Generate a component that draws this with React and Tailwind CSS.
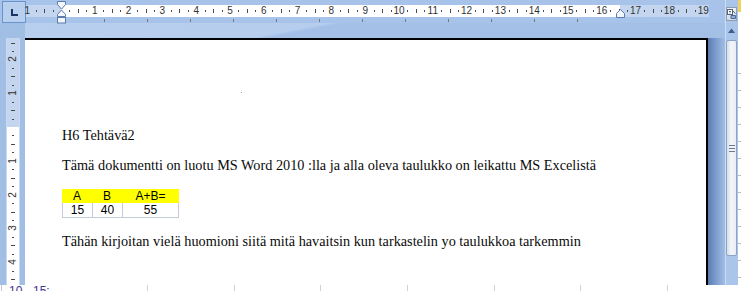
import React from "react";

const CM = 33.8;
const SANS = "font-['Liberation_Sans',Arial,sans-serif]";

function TabBox() {
  return (
    <div className="ml-[2px] mt-[1px] w-[24px] h-[22px] border border-[#6a92cf] bg-[#b9cfee] flex items-center justify-center">
      <svg width="7" height="7" viewBox="0 0 7 7">
        <path d="M0 0h2v5h5v2H0z" fill="#1b3466" />
      </svg>
    </div>
  );
}

function HRuler() {
  const O = 35;
  const W = 683;
  const ticks = [];
  for (let m = -7; m <= 80; m++) {
    if (m % 4 === 0) continue;
    const x = O + (m / 4) * CM;
    if (x < 2 || x > W - 2) continue;
    ticks.push({ m, x: Math.round(x), line: Math.abs(m % 4) === 2 });
  }
  const nums = [];
  for (let n = -1; n <= 19; n++) {
    if (n === 0) continue;
    nums.push({ n, x: O + n * CM });
  }
  const tabs = Array.from({ length: 12 }, (_, i) => O + 43 * (i + 1));
  return (
    <div className={`relative w-[683px] h-[23px] ${SANS}`}>
      <div className="mt-[5px] h-[12px] w-full flex">
        <div className="w-[35px] bg-[#c4d6ef]" />
        <div className="w-[559px] bg-white" />
        <div className="flex-1 bg-[#c4d6ef]" />
      </div>
      {ticks.map((t) => (
        <span
          key={t.m}
          className={t.line ? "absolute top-[9px] h-[4px] w-px bg-[#4a4a4a]" : "absolute top-[10px] h-[2px] w-px bg-[#4a4a4a]"}
          style={{ left: t.x }}
        />
      ))}
      {nums.map((n) => (
        <span
          key={n.n}
          className="absolute top-[5px] h-[12px] leading-[12px] text-[10px] text-[#333] -translate-x-1/2"
          style={{ left: n.x }}
        >
          {Math.abs(n.n)}
        </span>
      ))}
      {tabs.map((x) => (
        <span key={x} className="absolute top-[19px] h-[3px] w-px bg-[#777]" style={{ left: x }} />
      ))}
      <svg className="absolute left-[31px] top-[1px]" width="10" height="23" viewBox="0 0 10 23">
        <path d="M0.5 0.5H8.5V3.5L4.5 8.2L0.5 3.5Z" fill="#f2f6fb" stroke="#5b7bab" />
        <path d="M4.5 9L8.5 13.5V15.5H0.5V13.5Z" fill="#f2f6fb" stroke="#5b7bab" />
        <rect x="0.5" y="16.5" width="8" height="5.5" fill="#f2f6fb" stroke="#5b7bab" />
      </svg>
      <svg className="absolute left-[590px] top-[9px]" width="10" height="9" viewBox="0 0 10 9">
        <path d="M4.5 0.5L8.5 4.5V8.5H0.5V4.5Z" fill="#f2f6fb" stroke="#5b7bab" />
      </svg>
    </div>
  );
}

function VRuler() {
  const O = 89;
  const H = 247;
  const ticks = [];
  for (let m = -12; m <= 24; m++) {
    if (m % 4 === 0) continue;
    const y = O + (m / 4) * CM;
    if (y < 2 || y > H - 2) continue;
    ticks.push({ m, y: Math.round(y), line: Math.abs(m % 4) === 2 });
  }
  const nums = [];
  for (let n = -2; n <= 4; n++) {
    if (n === 0) continue;
    nums.push({ n, y: O + n * CM });
  }
  return (
    <div className={`relative w-[14px] h-[247px] border-x border-[#c9daf1] flex flex-col ${SANS}`}>
      <div className="h-[89px] bg-[#c4d6ef]" />
      <div className="flex-1 bg-white" />
      {ticks.map((t) => (
        <span
          key={t.m}
          className={t.line ? "absolute left-[4px] w-[4px] h-px bg-[#4a4a4a]" : "absolute left-[5px] w-[2px] h-px bg-[#4a4a4a]"}
          style={{ top: t.y }}
        />
      ))}
      {nums.map((n) => (
        <div
          key={n.n}
          className="absolute left-0 w-full h-[12px] flex items-center justify-center"
          style={{ top: n.y - 6 }}
        >
          <span className="block -rotate-90 text-[10px] leading-[10px] text-[#333]">{Math.abs(n.n)}</span>
        </div>
      ))}
    </div>
  );
}

function Page() {
  return (
    <div className="relative w-[683px] h-full bg-white border-t-2 border-r-2 border-black pl-[37px] pt-[87px] font-['Liberation_Serif','Times_New_Roman',serif] text-[14.25px] leading-[17px] text-[#0a0a0a]">
      <span className="absolute left-[216px] top-[52px] w-px h-px bg-[#9a9a9a]" />
      <p>H6 Tehtävä2</p>
      <p className="mt-[13px] whitespace-nowrap">
        Tämä dokumentti on luotu MS Word 2010 :lla ja alla oleva taulukko on leikattu MS Excelistä
      </p>
      <div className={`mt-[15px] w-[117px] ${SANS} text-[12px] leading-[14px] text-black`}>
        <div className="flex h-[14px] bg-[#ffff00]">
          <div className="w-[30px] text-center">A</div>
          <div className="w-[30px] text-center">B</div>
          <div className="w-[57px] text-center">A+B=</div>
        </div>
        <div className="flex h-[15px] border-b border-[#c3cbdb]">
          <div className="w-[30px] border-l border-[#c3cbdb] text-center">15</div>
          <div className="w-[30px] border-l border-[#c3cbdb] text-center">40</div>
          <div className="w-[57px] border-x border-[#c3cbdb] text-center">55</div>
        </div>
      </div>
      <p className="mt-[15px] whitespace-nowrap">
        Tähän kirjoitan vielä huomioni siitä mitä havaitsin kun tarkastelin yo taulukkoa tarkemmin
      </p>
    </div>
  );
}

function Scrollbar() {
  return (
    <div className="w-[13px] h-full border-l border-[#cddcf2] bg-[#aac5ea] flex flex-col">
      <div className="mt-[7px] w-[11px] h-[14px] border border-[#8d9db6] bg-[linear-gradient(#eef1f5,#d3dae5)] flex items-center justify-center">
        <svg width="9" height="10" viewBox="0 0 9 10">
          <rect x="0.5" y="0.5" width="5" height="5" fill="#fff" stroke="#5a6478" />
          <path d="M2 2.5h2M2.5 4h1" stroke="#5a6478" />
          <path d="M4 6.5L8.5 6.5L8.5 9.5L4 9.5Z" fill="#8fb0de" stroke="#4d6a98" />
          <path d="M6 2L8.5 4.5" stroke="#4d6a98" />
        </svg>
      </div>
      <div className="mt-[7px] w-[11px] flex justify-center">
        <svg width="7" height="5" viewBox="0 0 7 5">
          <path d="M3.5 0.5L7 5H0Z" fill="#3f5c8c" />
        </svg>
      </div>
      <div className="mt-[7px] w-[11px] h-[216px] border border-[#8aa3c8] rounded-[2px] bg-[linear-gradient(to_right,#d7dde7,#f4f6f9_45%,#e9edf3)] flex flex-col items-center justify-center gap-[2px]">
        <span className="w-[6px] h-px bg-[#6b7890]" />
        <span className="w-[6px] h-px bg-[#6b7890]" />
        <span className="w-[6px] h-px bg-[#6b7890]" />
      </div>
    </div>
  );
}

function RightStrip() {
  return (
    <div className="w-[3px] h-full bg-white flex flex-col">
      <div className="h-[12px] bg-[#f1d25e]" />
      <div className="pt-[61px] flex flex-col gap-[16px]">
        {Array.from({ length: 13 }, (_, i) => (
          <span key={i} className="h-px w-[3px] bg-[#bdbdbd]" />
        ))}
      </div>
    </div>
  );
}

function BottomStrip() {
  return (
    <div className={`h-[6px] bg-white overflow-hidden flex items-start ${SANS}`}>
      <span className="ml-[1px] w-px h-[6px] bg-[#c8c8c8]" />
      <span className="ml-[7px] w-[138px] text-[12px] leading-[12px] text-[#3b3494] whitespace-nowrap">10 - 15:</span>
      {Array.from({ length: 7 }, (_, i) => (
        <span key={i} className={i === 0 ? "w-px h-[6px] bg-[#d0d0d0]" : "ml-[85.7px] w-px h-[6px] bg-[#d0d0d0]"} />
      ))}
    </div>
  );
}

export default function App() {
  return (
    <div className="w-[741px] h-[291px] overflow-hidden flex flex-col bg-white">
      <div className="flex h-[285px]">
        <div className="w-[725px] h-full flex flex-col bg-[#a3bfe6]">
          <div className="h-[38px] flex flex-col bg-[#a7c3e9]">
            <div className="h-[23px] flex items-start">
              <TabBox />
              <HRuler />
            </div>
            <div className="h-[15px] flex">
              <div className="w-[25px] bg-[#a1bee5]" />
              <div className="flex-1 bg-[linear-gradient(169deg,#b9cfef_0%,#b6cdee_39%,#a4c0e7_41%,#a3bfe6_100%)]" />
            </div>
          </div>
          <div className="flex h-[247px]">
            <div className="w-[25px] pl-[6px] bg-[#a1bee5]">
              <VRuler />
            </div>
            <Page />
            <div className="w-[17px] h-full bg-[linear-gradient(to_right,#5b7cb1,#7f9fd0_50%,#a1bde4)]" />
          </div>
        </div>
        <Scrollbar />
        <RightStrip />
      </div>
      <BottomStrip />
    </div>
  );
}
